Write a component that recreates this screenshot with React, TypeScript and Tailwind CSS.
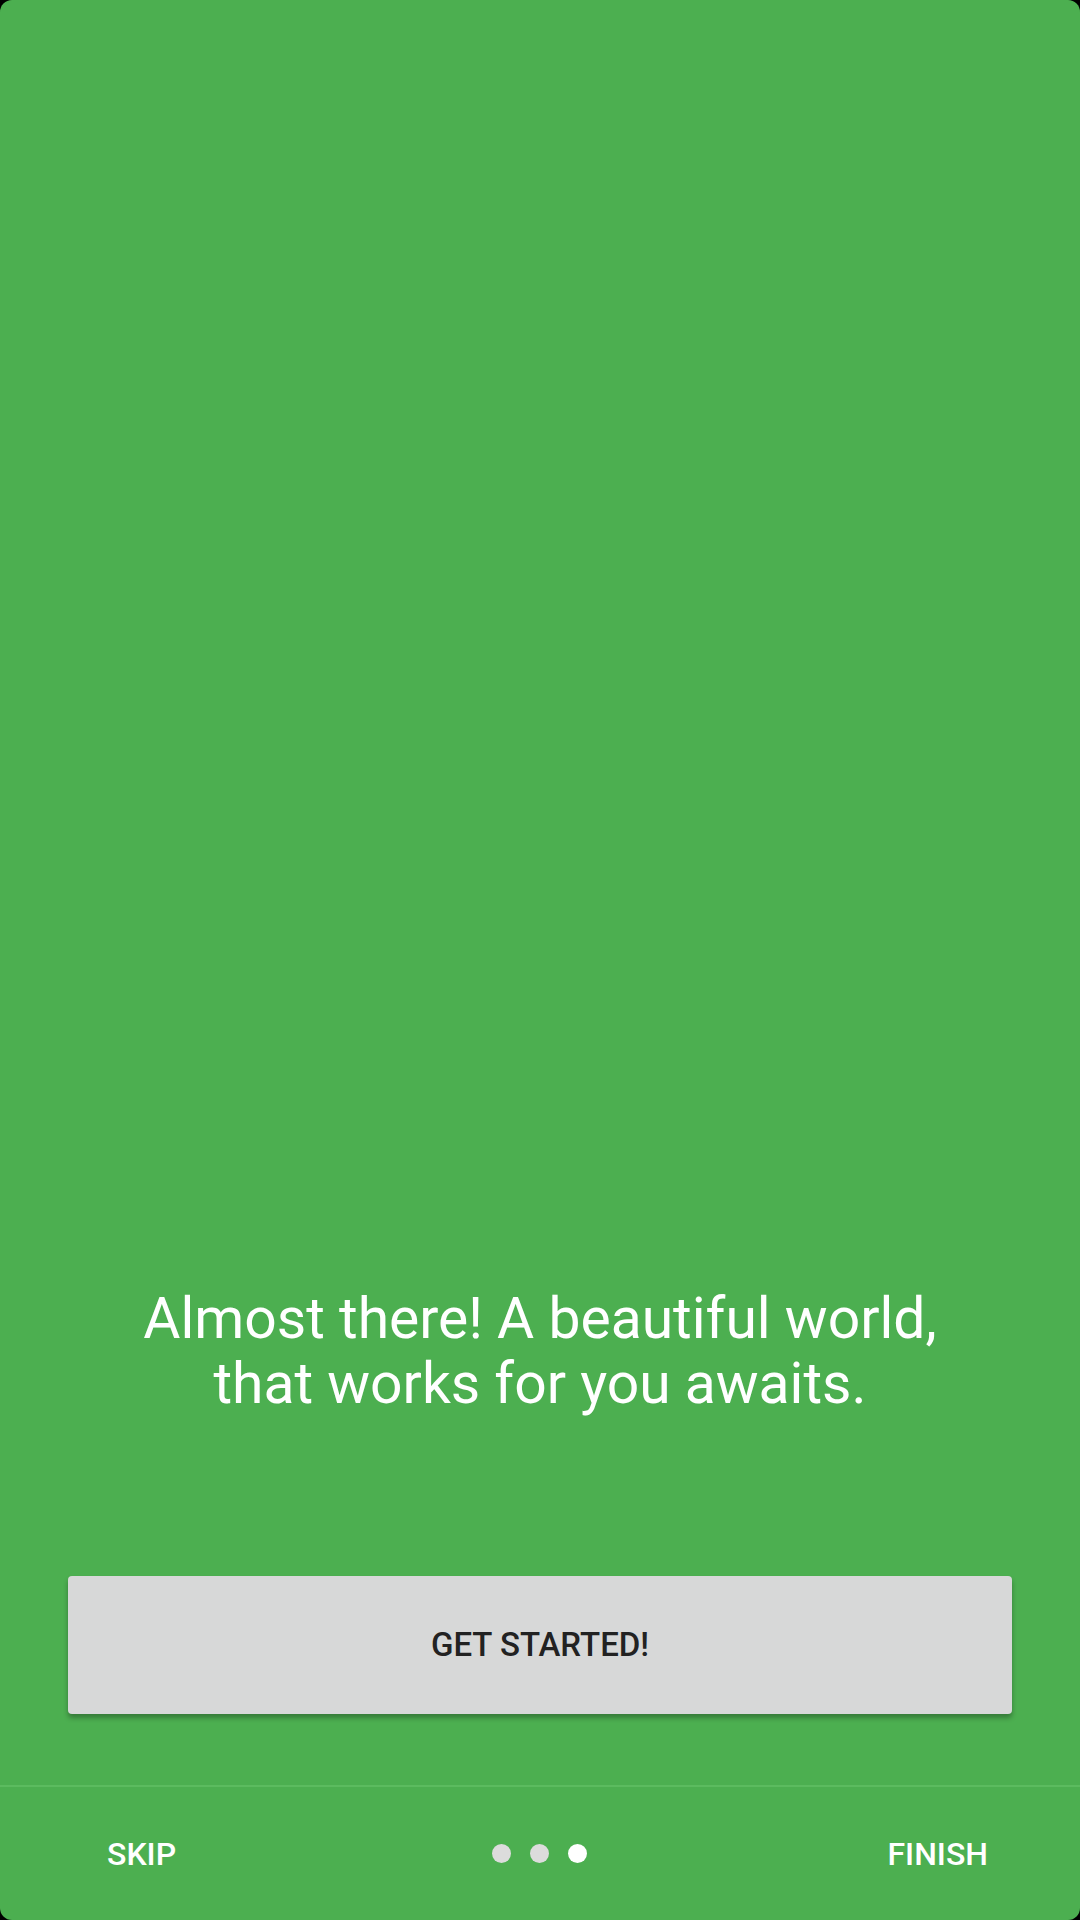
import React from "react";

const dots = [false, false, true];

export default function App() {
  return (
    <div className="w-[1080px] h-[1920px] bg-black font-['Roboto',sans-serif]">
      <div className="h-full rounded-[12px] bg-[#4caf50] flex flex-col justify-end">
        <p className="text-white text-[57px] leading-[65px] text-center px-10">
          Almost there! A beautiful world,
          <br />
          that works for you awaits.
        </p>

        <div className="mt-[160px] mx-[68px]">
          <button className="w-full h-[138px] rounded-[4px] bg-[#d7d8d8] shadow-[0_4px_5px_rgba(0,0,0,0.3)] text-[#222] text-[33px] font-medium">
            GET STARTED!
          </button>
        </div>

        <div className="mt-[71px] border-t-[2px] border-[#5cbb5f] h-[135px] flex items-center justify-between pl-[107px] pr-[92px]">
          <span className="text-white text-[32px] font-medium">SKIP</span>
          <div className="flex items-center gap-[19px] ml-[16px]">
            {dots.map((active, idx) => (
              <span
                key={idx}
                className={
                  active
                    ? "w-[19px] h-[19px] rounded-full bg-white"
                    : "w-[19px] h-[19px] rounded-full bg-[#dcdcdc]"
                }
              />
            ))}
          </div>
          <span className="text-white text-[32px] font-medium">FINISH</span>
        </div>
      </div>
    </div>
  );
}
